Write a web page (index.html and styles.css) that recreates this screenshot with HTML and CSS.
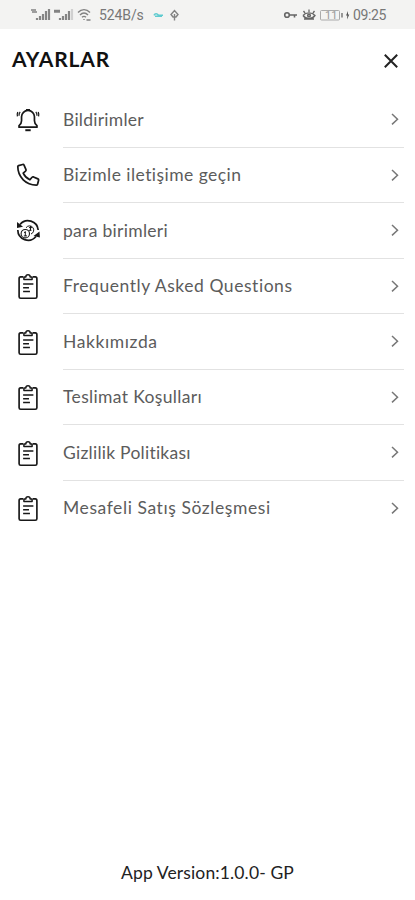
FILE: index.html
```html
<!DOCTYPE html>
<html lang="tr">
<head>
<meta charset="utf-8">
<meta name="viewport" content="width=device-width, initial-scale=1">
<title>Ayarlar</title>
<link rel="stylesheet" href="styles.css">
</head>
<body>
<svg class="defs" aria-hidden="true">
  <symbol id="bell" viewBox="-1.500 -1 29 29">
    <path d="M3 21.500h20v-1.800c-2.200-1.700-2.800-3-2.800-5.400V10a7.200 7.200 0 0 0-14.400 0v4.300c0 2.400-.6 3.700-2.800 5.400z" stroke-width="1.900"/>
    <path d="M10 24.900h6" stroke-width="2.200"/>
    <path d="M10.800 1.800h4.400M4.300 4.500C3.200 5.600 2.800 7 3 8.800M21.700 4.500c1.100 1.100 1.500 2.500 1.300 4.300M1.600 4.500C.7 6.500.8 8 1.200 9.500M24.400 4.500c.9 2 .8 3.500.4 5" stroke-width="1.400"/>
  </symbol>
  <symbol id="phone" viewBox="-.5 0 27 28">
    <path d="M3.200 4.200 7.400 3.100c.8-.2 1.200.1 1.500.7l2 4.600c.2.600.1 1.100-.4 1.500L8 12c1.500 3.200 3.700 5.400 7 7l2.200-2.600c.4-.5.900-.6 1.500-.4l4.600 2c.6.300.9.800.7 1.400l-1 4c-.1.600-.6 1-1.200 1C11 24.500 2.400 16.300 2.400 5.300c0-.6.300-.9.800-1.100zM8 12l2.500-2.100M15 19l2.200-2.600" stroke-width="1.800"/>
  </symbol>
  <symbol id="currency" viewBox="0 0 26 28">
    <path d="M5 7.500A10.300 10.300 0 0 1 23.200 13M21 19.500A10.300 10.300 0 0 1 2.800 13" stroke-width="1.700"/>
    <path class="solid" d="M2 5v6l6-1.300zM24.500 14.500l.4 6-6.400-1.600z"/>
    <circle cx="10.300" cy="16.700" r="4.200" stroke-width="1.100"/>
    <path d="M11 10.800a4.200 4.200 0 1 1 5 6.200M10.300 14.300v4.800M9 15.400h1.500M8.800 18.900h3.200M15.500 9v4.500M14 10.600h3M14 13.300h2.500" stroke-width="1"/>
  </symbol>
  <symbol id="clipboard" viewBox="-.3 -.7 26.600 28">
    <path d="M8 4H5.500C4.300 4 3.900 4.700 3.900 5.800v18.400c0 1.100.4 1.600 1.600 1.600h15c1.200 0 1.600-.5 1.600-1.600V5.800c0-1.100-.4-1.800-1.600-1.800H18" stroke-width="1.700"/>
    <path d="M8.800 4h2a2.200 2.200 0 0 1 4.400 0h2v2.600H8.800z" stroke-width="1.500"/>
    <path d="M8 11.200h10.500M8 15.100h6M8 19h7" stroke-width="1.600"/>
  </symbol>
  <symbol id="chevron" viewBox="0 0 10 14"><path d="m2 2 5.500 5.200L2 12.400" stroke-width="1.500"/></symbol>
</svg>
<header class="status">
  <svg class="status-signals" viewBox="0 0 62 16">
    <g class="bars"><path d="M7 13v-2M10 13V9M13 13V7M16 13V4M19 13V2"/><path d="M30 13v-2M33 13V9M36 13V7M39 13V4"/><path class="faint" d="M42 13V2"/></g>
    <path class="tag" d="M1 3h5M2 5h5M24 3.500h6M24 5h6"/>
    <path class="wave" d="M48 5.500c3.500-3.800 8.500-3.800 12 0M50 8c2.500-2.600 5.500-2.600 8 0M52 10.300c1.300-1.200 2.700-1.200 4 0M54 12v1M56.500 13h4"/>
  </svg>
  <span class="speed">524B/s</span>
  <svg class="status-link" viewBox="0 0 30 16"><path class="cyan" d="M3 8.300c1-2 3-2 4.500 0H12M4 9.200h7"/><path class="wave" d="m20 7.500 3.500-4 3.500 4-2 2.500h-3zM23.500 7v6.500"/></svg>
  <svg class="status-right" viewBox="0 0 70 16">
    <circle class="dark" cx="5" cy="8" r="2.300"/><path class="dark" d="M7.500 8h7.500M12.500 8v2.500"/>
    <path class="dark eye" d="M21 8.500c3-3.500 9-3.500 12 0-3 4-9 4-12 0M27 5V2.500M23 6l-1.500-2M31 6l1.500-2M22 12h10"/><circle class="dark" cx="27" cy="8.500" r="1.300"/>
    <rect class="battery" x="38.500" y="3.500" width="19" height="9.500" rx="1"/><path class="dark eye" d="M60 6v4.500"/>
    <path class="solid bolt" d="m66 4-2 4.500h1.300L65 12.500l2.300-5H66z"/>
    <text x="43" y="12">11</text>
  </svg>
  <span class="clock">09:25</span>
</header>
<div class="titlebar">
  <h1>AYARLAR</h1>
  <svg class="close" viewBox="0 0 16 16"><path d="m1.800 1.800 12.400 12.400M14.200 1.800 1.800 14.200"/></svg>
</div>
<main class="list">
  <div class="row"><svg class="icon"><use href="#bell"/></svg><div class="cell"><span class="t1">Bildirimler</span><svg class="chevron"><use href="#chevron"/></svg></div></div>
  <div class="row"><svg class="icon"><use href="#phone"/></svg><div class="cell"><span class="t2">Bizimle iletişime geçin</span><svg class="chevron"><use href="#chevron"/></svg></div></div>
  <div class="row"><svg class="icon"><use href="#currency"/></svg><div class="cell"><span class="t3">para birimleri</span><svg class="chevron"><use href="#chevron"/></svg></div></div>
  <div class="row"><svg class="icon"><use href="#clipboard"/></svg><div class="cell"><span class="t4">Frequently Asked Questions</span><svg class="chevron"><use href="#chevron"/></svg></div></div>
  <div class="row"><svg class="icon"><use href="#clipboard"/></svg><div class="cell"><span class="t5">Hakkımızda</span><svg class="chevron"><use href="#chevron"/></svg></div></div>
  <div class="row"><svg class="icon"><use href="#clipboard"/></svg><div class="cell"><span class="t6">Teslimat Koşulları</span><svg class="chevron"><use href="#chevron"/></svg></div></div>
  <div class="row"><svg class="icon"><use href="#clipboard"/></svg><div class="cell"><span class="t7">Gizlilik Politikası</span><svg class="chevron"><use href="#chevron"/></svg></div></div>
  <div class="row"><svg class="icon"><use href="#clipboard"/></svg><div class="cell"><span class="t8">Mesafeli Satış Sözleşmesi</span><svg class="chevron"><use href="#chevron"/></svg></div></div>
</main>
<footer>App Version:1.0.0- GP</footer>
</body>
</html>
```
FILE: styles.css
```css
* { box-sizing: border-box; }
body { margin: 0; height: 900px; display: flex; flex-direction: column; background: #fff; color: #111; font-family: Lato, "Open Sans", sans-serif; font-variant-ligatures: none; overflow: hidden; }
svg { fill: none; flex-shrink: 0; }
.defs { display: none; }
.status { height: 29px; flex-shrink: 0; display: flex; align-items: center; background: #f3f3f2; padding: 1px 0 0 30px; color: #777; font-family: Roboto, sans-serif; font-size: 14px; white-space: nowrap; }
.status-signals { width: 62px; height: 16px; }
.bars { stroke: #858585; stroke-width: 2.2; }
.faint { stroke: #d0d0d0; }
.tag, .wave { stroke: #828282; stroke-width: 1.4; }
.speed { width: 44px; margin-left: 7px; letter-spacing: -.1px; }
.status-link { width: 30px; height: 16px; margin-left: 8px; }
.cyan { stroke: #5fcbd0; stroke-width: 1.6; }
.status-right { width: 70px; height: 16px; margin-left: 101px; }
.dark { stroke: #666; stroke-width: 1.6; }
.eye { stroke-width: 1.3; }
.battery { stroke: #aaa; stroke-width: 1; }
.solid { fill: #181818; stroke: none; }
.bolt { fill: #555; }
.status-right text { fill: #999; font-size: 11px; }
.clock { margin-left: 1px; letter-spacing: -.4px; }
.titlebar { height: 63px; flex-shrink: 0; display: flex; align-items: center; justify-content: space-between; padding: 0 16px 0 12px; }
h1 { margin: -3px 0 0; font-size: 21px; font-weight: 700; line-height: 24px; letter-spacing: .85px; }
.close { width: 16px; height: 16px; stroke: #222; stroke-width: 2; }
.row { height: 55.5px; display: flex; align-items: center; padding: 0 11px 0 15px; }
.icon { width: 26px; height: 28px; stroke: #181818; stroke-linejoin: round; }
.cell { flex: 1; height: 100%; margin-left: 22px; display: flex; align-items: center; justify-content: space-between; border-bottom: 1px solid #e2e2e2; padding-right: 4px; color: #5c5c5c; font-size: 17.5px; white-space: nowrap; }
.row:last-child .cell { border-bottom-color: transparent; }
.t1 { letter-spacing: .25px; }
.t2 { letter-spacing: .45px; }
.t3 { letter-spacing: .3px; }
.t4 { letter-spacing: .55px; }
.t5 { letter-spacing: .6px; }
.t6 { letter-spacing: .35px; }
.t7 { letter-spacing: .25px; }
.t8 { letter-spacing: .58px; }
.chevron { width: 10px; height: 14px; stroke: #777; }
footer { margin-top: auto; height: 54px; line-height: 54px; text-align: center; font-size: 17.5px; letter-spacing: .13px; color: #222; }
```
